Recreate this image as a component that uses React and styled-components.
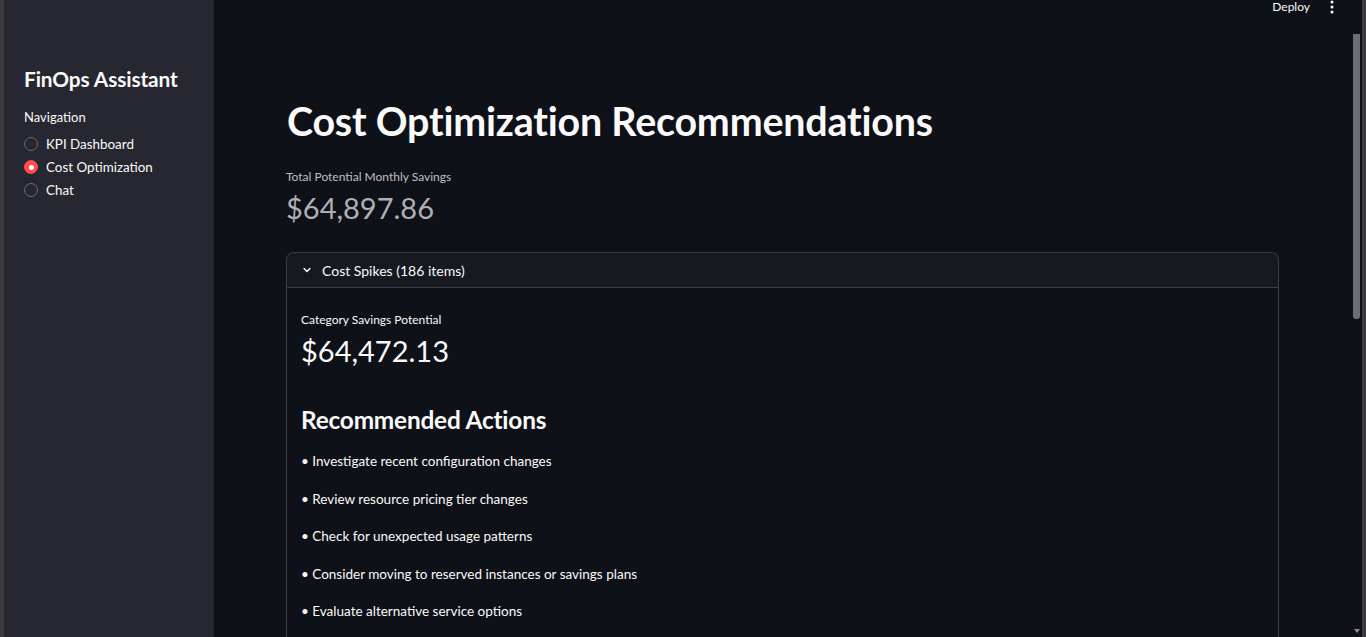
import { createGlobalStyle, styled } from "styled-components"

const Global = createGlobalStyle`
    html, body {
        margin: 0;
        padding: 0;
        height: 100%;
        background: #0e1117;
        overflow: hidden;
    }
    #root {
        height: 100%;
    }
    * {
        box-sizing: border-box;
    }
`

const Frame = styled.div`
    display: flex;
    height: 637px;
    width: 1366px;
    overflow: hidden;
    font-family: "Lato", "Liberation Sans", sans-serif;
    color: #fafafa;
`
const Edge = styled.div`
    width: 4px;
    flex-shrink: 0;
    background: #3b3b3d;
`
const Sidebar = styled.aside`
    width: 210px;
    flex-shrink: 0;
    background: #262730;
    padding: 66px 20px 0 20px;
`
const SideTitle = styled.h2`
    margin: 0 0 18px;
    font-size: 20.8px;
    font-weight: 700;
    letter-spacing: -0.1px;
`
const NavLabel = styled.div`
    font-size: 13px;
    margin-bottom: 10px;
`
const RadioGroup = styled.div`
    display: flex;
    flex-direction: column;
    gap: 5px;
`
const RadioRow = styled.label`
    display: flex;
    align-items: center;
    gap: 8px;
    height: 18px;
    font-size: 13.4px;
`
const Dot = styled.span`
    width: 14px;
    height: 14px;
    border-radius: 50%;
    display: flex;
    align-items: center;
    justify-content: center;
    border: 1px solid ${({ $on }) => ($on ? "#ff4b4b" : "#6a6c73")};
    background: ${({ $on }) => ($on ? "#ff4b4b" : "transparent")};
    &::after {
        content: "";
        width: 5px;
        height: 5px;
        border-radius: 50%;
        background: ${({ $on }) => ($on ? "#ffffff" : "transparent")};
    }
`

const Main = styled.main`
    flex: 1;
    position: relative;
    display: flex;
    flex-direction: column;
    overflow: hidden;
`
const Header = styled.header`
    height: 14px;
    flex-shrink: 0;
    display: flex;
    justify-content: flex-end;
    align-items: center;
    gap: 20px;
    padding: 0 28px 0 0;
`
const Deploy = styled.span`
    font-size: 12px;
    line-height: 14px;
`
const Content = styled.div`
    padding: 82px 83px 0 72px;
`
const Title = styled.h1`
    margin: 0 0 23px 1px;
    font-size: 39.4px;
    font-weight: 700;
    letter-spacing: -0.2px;
    line-height: 50px;
`
const MetricLabel = styled.div`
    font-size: 12px;
    color: ${({ $dim }) => ($dim ? "#bfc0c3" : "#fafafa")};
    margin-bottom: 6px;
`
const MetricValue = styled.div`
    font-size: 29px;
    line-height: 36px;
    color: ${({ $dim }) => ($dim ? "#aeb0b4" : "#fafafa")};
    font-weight: 400;
`
const Expander = styled.section`
    margin-top: 26px;
    border: 1px solid #3a3d45;
    border-radius: 8px 8px 0 0;
    border-bottom: none;
`
const ExpHead = styled.div`
    height: 35px;
    display: flex;
    align-items: center;
    gap: 8px;
    padding: 0 14px 0 13px;
    background: #161920;
    border-bottom: 1px solid #3a3d45;
    border-radius: 8px 8px 0 0;
    font-size: 14px;
`
const ExpBody = styled.div`
    padding: 24px 14px 60px;
`
const SubHead = styled.h3`
    margin: 36px 0 17px;
    font-size: 24.4px;
    font-weight: 700;
    letter-spacing: -0.2px;
    line-height: 30px;
`
const Bullet = styled.p`
    margin: 0 0 19px;
    font-size: 13.5px;
    line-height: 18.5px;
`
const Scroll = styled.div`
    position: absolute;
    right: 2px;
    top: 34px;
    width: 7px;
    height: 285px;
    background: #6c6e73;
    border-radius: 0 0 3px 3px;
`
const ArrowDown = styled.div`
    position: absolute;
    right: 2px;
    bottom: 4px;
    width: 0;
    height: 0;
    border-left: 3.5px solid transparent;
    border-right: 3.5px solid transparent;
    border-top: 4px solid #8a8c90;
`

const Kebab = () => (
    <svg width="4" height="14" viewBox="0 0 4 14">
        <circle cx="2" cy="2" r="1.5" fill="#fafafa" />
        <circle cx="2" cy="7" r="1.5" fill="#fafafa" />
        <circle cx="2" cy="12" r="1.5" fill="#fafafa" />
    </svg>
)

const Chevron = () => (
    <svg width="14" height="14" viewBox="0 0 24 24">
        <path d="M7 9.5l5 5 5-5" fill="none" stroke="#fafafa" strokeWidth="2.6" strokeLinecap="round" strokeLinejoin="round" />
    </svg>
)

const nav = ["KPI Dashboard", "Cost Optimization", "Chat"]
const actions = [
    "Investigate recent configuration changes",
    "Review resource pricing tier changes",
    "Check for unexpected usage patterns",
    "Consider moving to reserved instances or savings plans",
    "Evaluate alternative service options",
]

export default function App() {
    return (
        <Frame>
            <Global />
            <Edge />
            <Sidebar>
                <SideTitle>FinOps Assistant</SideTitle>
                <NavLabel>Navigation</NavLabel>
                <RadioGroup>
                    {nav.map((n) => (
                        <RadioRow key={n}>
                            <Dot $on={n === "Cost Optimization"} />
                            {n}
                        </RadioRow>
                    ))}
                </RadioGroup>
            </Sidebar>
            <Main>
                <Header>
                    <Deploy>Deploy</Deploy>
                    <Kebab />
                </Header>
                <Content>
                    <Title>Cost Optimization Recommendations</Title>
                    <MetricLabel $dim>Total Potential Monthly Savings</MetricLabel>
                    <MetricValue $dim>$64,897.86</MetricValue>
                    <Expander>
                        <ExpHead>
                            <Chevron />
                            Cost Spikes (186 items)
                        </ExpHead>
                        <ExpBody>
                            <MetricLabel>Category Savings Potential</MetricLabel>
                            <MetricValue>$64,472.13</MetricValue>
                            <SubHead>Recommended Actions</SubHead>
                            {actions.map((a) => (
                                <Bullet key={a}>• {a}</Bullet>
                            ))}
                        </ExpBody>
                    </Expander>
                </Content>
                <Scroll />
                <ArrowDown />
            </Main>
            <Edge />
        </Frame>
    )
}
